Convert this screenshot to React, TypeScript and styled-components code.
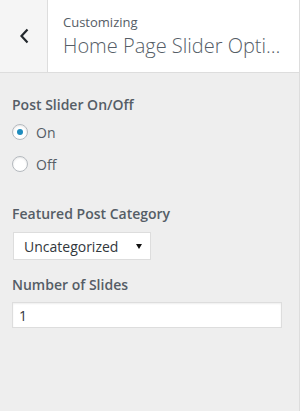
import React, { useState } from 'react'
import styled, { createGlobalStyle } from 'styled-components'

const GlobalStyle = createGlobalStyle`
  html, body {
    margin: 0;
    padding: 0;
    background: #eeeeee;
  }
  body {
    font-family: "Open Sans", "Liberation Sans", sans-serif;
    color: #555d66;
  }
  * {
    box-sizing: border-box;
  }
`

const Panel = styled.div`
  width: 300px;
  height: 411px;
  display: flex;
  flex-direction: column;
  background: #eeeeee;
  border-right: 1px solid #dddddd;
`

const Header = styled.div`
  display: flex;
  height: 73px;
  flex-shrink: 0;
  background: #ffffff;
  border-bottom: 1px solid #dddddd;
`

const BackButton = styled.button`
  width: 48px;
  height: 100%;
  padding: 0;
  margin: 0;
  border: none;
  border-right: 1px solid #dddddd;
  background: #f5f5f5;
  display: flex;
  align-items: center;
  justify-content: center;
  cursor: pointer;
`

const TitleBlock = styled.div`
  flex: 1;
  min-width: 0;
  padding: 13px 17px 0 15px;
`

const Eyebrow = styled.div`
  font-size: 13px;
  line-height: 18px;
  color: #555d66;
`

const Title = styled.div`
  margin-top: 1px;
  font-size: 20px;
  line-height: 28px;
  font-weight: 300;
  color: #555d66;
  white-space: nowrap;
  overflow: hidden;
  text-overflow: ellipsis;
`

const Body = styled.div`
  padding: 22px 12px 0 12px;
`

const Section = styled.div<{ gap?: number }>`
  margin-top: ${({ gap }) => gap ?? 0}px;
`

const Label = styled.div`
  font-size: 14px;
  line-height: 20px;
  font-weight: 600;
  color: #555d66;
`

const RadioList = styled.div`
  margin-top: 1px;
`

const RadioRow = styled.label`
  display: flex;
  align-items: center;
  height: 32px;
  gap: 8px;
  font-size: 14px;
  color: #555d66;
  cursor: pointer;
`

const RadioCircle = styled.span<{ checked: boolean }>`
  width: 16px;
  height: 16px;
  border-radius: 50%;
  border: 1px solid #b4b9be;
  background: #ffffff;
  box-shadow: inset 0 1px 2px rgba(0, 0, 0, 0.1);
  display: flex;
  align-items: center;
  justify-content: center;
  &::after {
    content: '';
    width: 6px;
    height: 6px;
    border-radius: 50%;
    background: ${({ checked }) => (checked ? '#1e8cbe' : 'transparent')};
  }
`

const SelectBox = styled.div`
  margin: 8px 0 0 1px;
  width: 138px;
  height: 28px;
  display: flex;
  align-items: center;
  justify-content: space-between;
  padding: 0 8px 0 10px;
  background: #ffffff;
  border: 1px solid #dddddd;
  font-size: 14px;
  color: #32373c;
`

const NumberInput = styled.input`
  margin-top: 7px;
  display: block;
  width: 270px;
  height: 26px;
  padding: 0 6px;
  font-family: "Open Sans", "Liberation Sans", sans-serif;
  font-size: 14px;
  color: #32373c;
  background: #ffffff;
  border: 1px solid #dddddd;
  box-shadow: inset 0 1px 2px rgba(0, 0, 0, 0.07);
  outline: none;
`

const options = ['On', 'Off']

export default function App() {
  const [slider, setSlider] = useState('On')
  const [slides, setSlides] = useState('1')

  return (
    <>
      <GlobalStyle />
      <Panel>
        <Header>
          <BackButton aria-label="Back">
            <svg width="12" height="16" viewBox="0 0 12 16">
              <polyline points="9.5,1.5 3.5,8 9.5,14.5" fill="none" stroke="#23282d" strokeWidth="2.2" />
            </svg>
          </BackButton>
          <TitleBlock>
            <Eyebrow>Customizing</Eyebrow>
            <Title>Home Page Slider Options</Title>
          </TitleBlock>
        </Header>
        <Body>
          <Section>
            <Label>Post Slider On/Off</Label>
            <RadioList>
              {options.map(opt => (
                <RadioRow key={opt} onClick={() => setSlider(opt)}>
                  <RadioCircle checked={slider === opt} />
                  {opt}
                </RadioRow>
              ))}
            </RadioList>
          </Section>
          <Section gap={24}>
            <Label>Featured Post Category</Label>
            <SelectBox>
              <span>Uncategorized</span>
              <svg width="6" height="5" viewBox="0 0 6 5">
                <polygon points="0,0 6,0 3,5" fill="#111" />
              </svg>
            </SelectBox>
          </Section>
          <Section gap={15}>
            <Label>Number of Slides</Label>
            <NumberInput value={slides} onChange={e => setSlides(e.target.value)} />
          </Section>
        </Body>
      </Panel>
    </>
  )
}
